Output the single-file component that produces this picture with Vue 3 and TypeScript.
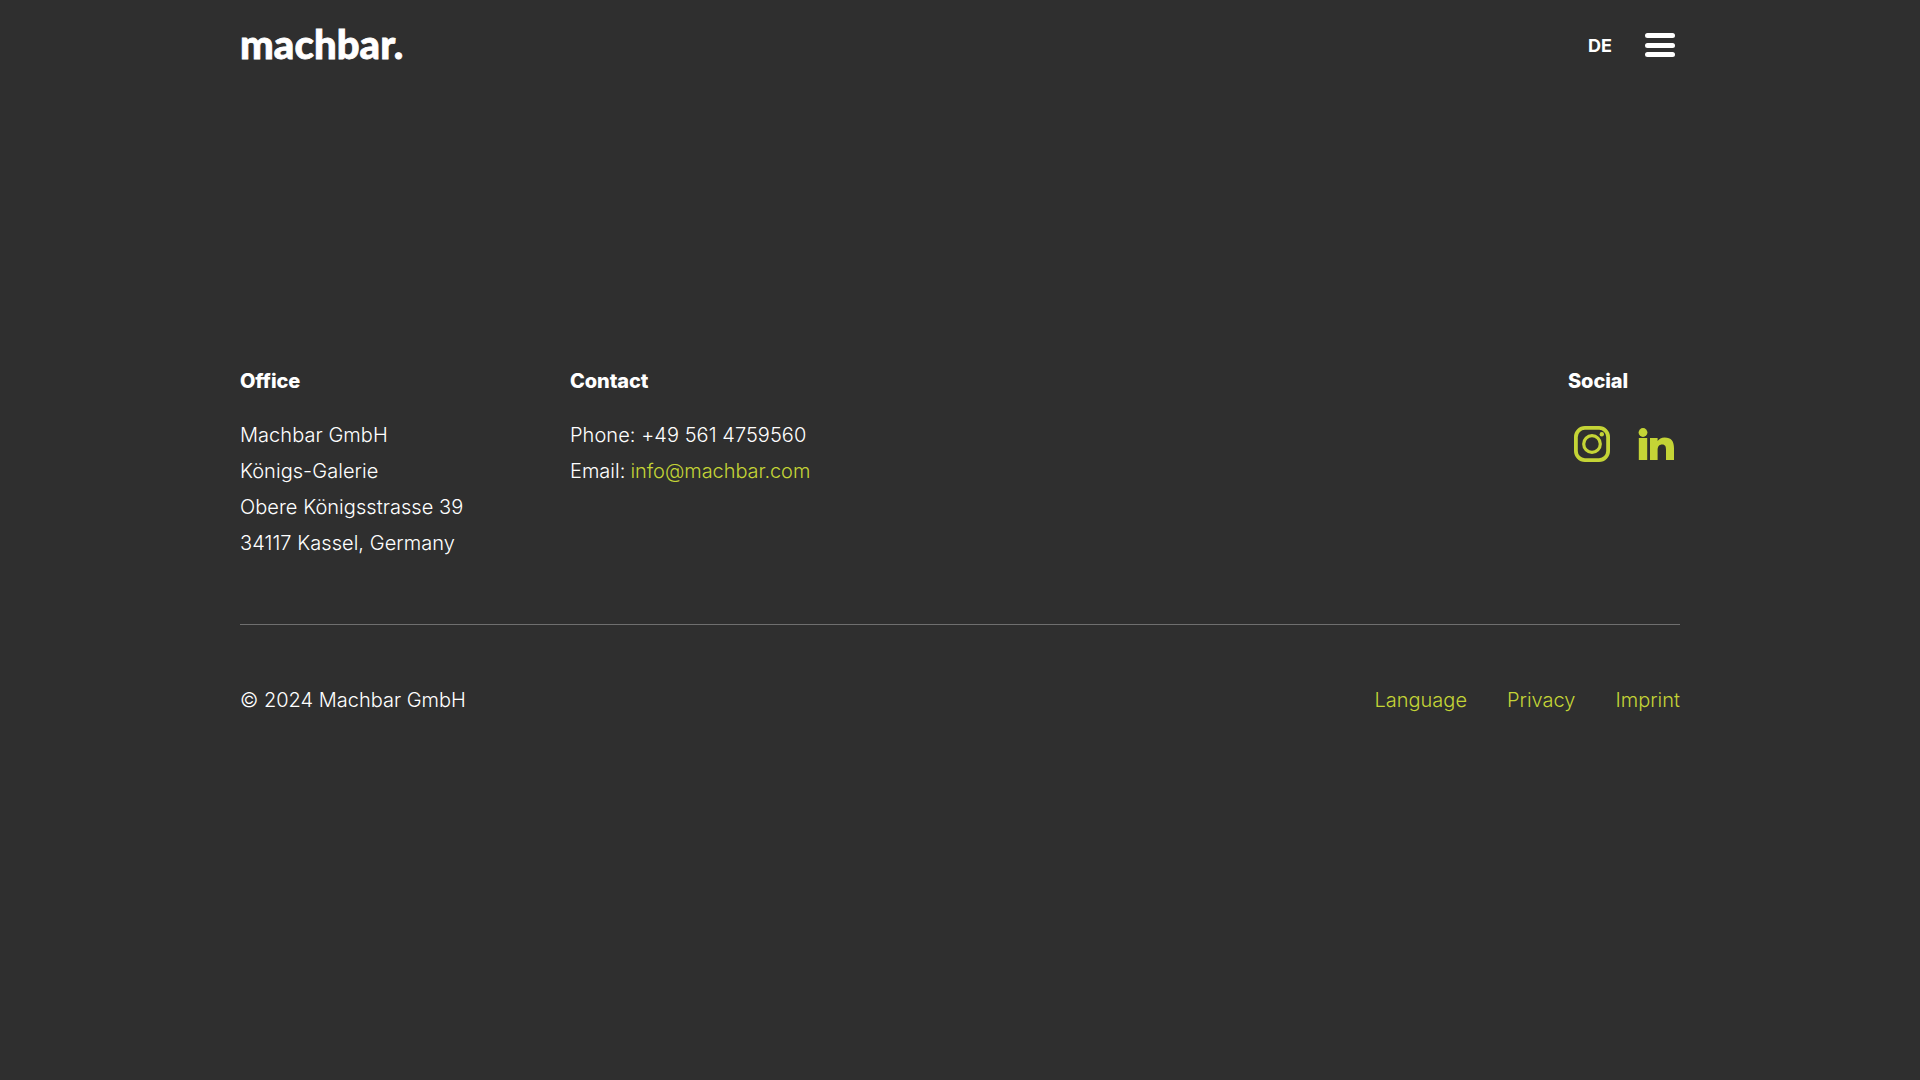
<script setup lang="ts">
const office: string[] = ['Machbar GmbH', 'Königs-Galerie', 'Obere Königsstrasse 39', '34117 Kassel, Germany']
const legal: string[] = ['Language', 'Privacy', 'Imprint']
</script>

<template>
  <div class="page">
    <header class="header">
      <a class="logo">machbar.</a>
      <div class="nav">
        <span class="lang">DE</span>
        <span class="burger"><i></i><i></i><i></i></span>
      </div>
    </header>
    <footer class="footer">
      <div class="cols">
        <section class="office">
          <h4>Office</h4>
          <p v-for="l in office" :key="l" class="wide">{{ l }}</p>
        </section>
        <section class="contact">
          <h4>Contact</h4>
          <p class="wide">Phone: +49 561 4759560</p>
          <p>Email: <a class="accent link">info@machbar.com</a></p>
        </section>
        <section class="social">
          <h4>Social</h4>
          <div class="icons">
            <svg width="36" height="36" viewBox="0 0 36 36" fill="none" stroke="#c4d436">
              <rect x="1.900" y="1.900" width="32.200" height="32.200" rx="9" stroke-width="3.800" />
              <circle cx="18" cy="18" r="8.300" stroke-width="3.200" />
              <circle cx="27.800" cy="8.200" r="2.200" fill="#c4d436" stroke="none" />
            </svg>
            <svg class="in" width="36" height="32" viewBox="0 0 36 32" fill="#c4d436">
              <circle cx="5" cy="4.500" r="4.400" />
              <rect x="0.800" y="10" width="8.400" height="22" />
              <path d="M12 10h7.600v3c1.300-2 3.800-3.600 7-3.600 6.800 0 9.400 4 9.400 10.600V32H28V21.600c0-2.800-.6-5.200-3.800-5.200-3.200 0-4.600 2.200-4.600 5.300V32H12z" />
            </svg>
          </div>
        </section>
      </div>
      <div class="bottom">
        <span>© 2024 Machbar GmbH</span>
        <nav class="legal">
          <a v-for="l in legal" :key="l" class="accent">{{ l }}</a>
        </nav>
      </div>
    </footer>
  </div>
</template>

<style>
html, body { margin: 0; background: #2f2f2f; }
</style>

<style scoped>
.page {
  min-height: 1080px;
  background: #2f2f2f;
  color: #fff;
  font-family: Inter, "Liberation Sans", sans-serif;
  font-size: 20px;
  font-weight: 300;
  line-height: 36px;
  padding: 0 240px;
  box-sizing: border-box;
}
.header {
  height: 90px;
  display: flex;
  align-items: center;
  justify-content: space-between;
}
.logo {
  font-family: Lato, sans-serif;
  font-weight: 900;
  font-size: 40px;
  line-height: 1;
  letter-spacing: 0.1px;
  padding-bottom: 2px;
  -webkit-text-stroke: 0.8px #fff;
}
.nav { display: flex; align-items: center; gap: 33px; padding-right: 5px; }
.lang { font-size: 18px; font-weight: 700; padding-top: 2px; }
.burger { display: flex; flex-direction: column; gap: 4.5px; width: 30px; }
.burger i { display: block; height: 5px; border-radius: 3px; background: #fff; }
.footer { padding-top: 273px; }
.cols { display: flex; padding-bottom: 63px; border-bottom: 1px solid #6f6f6f; }
.office { width: 330px; }
.contact { flex: 1; }
.social { width: 112px; }
h4 { margin: 0 0 18px; font-size: 20px; font-weight: 800; line-height: 36px; letter-spacing: -0.1px; }
p { margin: 0; }
.wide { letter-spacing: 0.05px; }
.accent { color: #c4d436; }
.link { letter-spacing: -0.06px; margin-left: -0.5px; }
.icons { display: flex; gap: 28px; padding: 9px 0 0 6px; align-items: flex-start; }
.in { margin-top: 2px; }
.bottom {
  display: flex;
  justify-content: space-between;
  padding-top: 57px;
}
.legal { display: flex; gap: 40px; }
</style>
